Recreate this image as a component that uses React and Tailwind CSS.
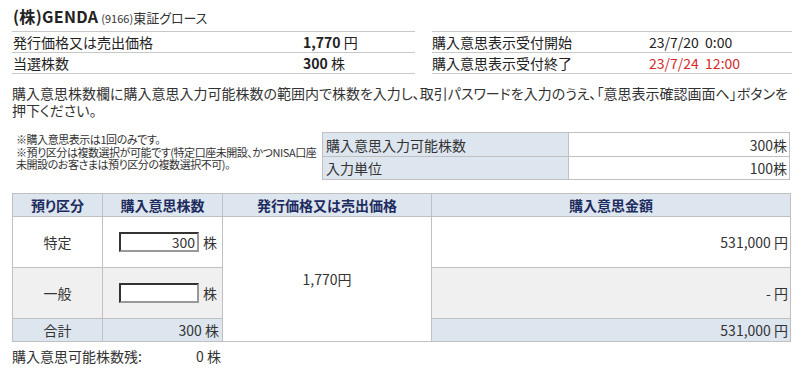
import { useState } from "react";

const FONT = "[font-family:'Noto_Sans_CJK_JP','Noto_Sans',sans-serif] [font-feature-settings:'palt']";

export default function App() {
  const [tokutei, setTokutei] = useState("300");
  const [ippan, setIppan] = useState("");

  return (
    <div className={`w-[802px] h-[372px] overflow-hidden bg-white text-[#333] ${FONT}`}>
      {/* title */}
      <div className="flex items-baseline pl-[13px] pt-[4px] h-[31px]">
        <span className="text-[16px] font-bold text-[#222] tracking-[0.3px]">(株)GENDA</span>
        <span className="ml-[3px] text-[11px]">(9166)</span>
        <span className="text-[13px]">東証グロース</span>
      </div>

      {/* summary */}
      <div className="flex gap-[17px] pl-[12px] text-[14px] text-[#222]">
        <table className="w-[403px] border-collapse">
          <tbody>
            <tr className="h-[21px] border-y border-[#c8c8c8]">
              <td className="pl-[1px] leading-none">発行価格又は売出価格</td>
              <td className="w-[112px] leading-none">
                <b>1,770</b> 円
              </td>
            </tr>
            <tr className="h-[21px] border-b border-[#c8c8c8]">
              <td className="pl-[1px] leading-none">当選株数</td>
              <td className="leading-none">
                <b>300</b> 株
              </td>
            </tr>
          </tbody>
        </table>
        <table className="w-[360px] border-collapse">
          <tbody>
            <tr className="h-[21px] border-y border-[#c8c8c8]">
              <td className="leading-none">購入意思表示受付開始</td>
              <td className="w-[143px] leading-none">23/7/20&nbsp;&nbsp;0:00</td>
            </tr>
            <tr className="h-[21px] border-b border-[#c8c8c8]">
              <td className="leading-none">購入意思表示受付終了</td>
              <td className="leading-none text-[#d42a2a]">23/7/24&nbsp;&nbsp;12:00</td>
            </tr>
          </tbody>
        </table>
      </div>

      <p className="mt-[11px] pl-[12px] pr-[10px] text-[14px] leading-[17px] whitespace-nowrap">
        購入意思株数欄に購入意思入力可能株数の範囲内で株数を入力し、取引パスワードを入力のうえ、「意思表示確認画面へ」ボタンを
        <br />
        押下ください。
      </p>

      {/* notes + limits */}
      <div className="mt-[13px] flex pl-[16px]">
        <div className="w-[306px] text-[11px] leading-[12.5px] tracking-[-0.45px] pt-[1px] whitespace-nowrap">
          <div>※購入意思表示は1回のみです。</div>
          <div>※預り区分は複数選択が可能です(特定口座未開設、かつNISA口座</div>
          <div>未開設のお客さまは預り区分の複数選択不可)。</div>
        </div>
        <table className="w-[468px] border-collapse text-[14px]">
          <tbody>
            <tr className="h-[24px]">
              <td className="w-[246px] border border-[#c0c0c0] bg-[#dde5ef] pl-[3px] leading-none">購入意思入力可能株数</td>
              <td className="border border-[#c0c0c0] pr-[2px] text-right leading-none">300株</td>
            </tr>
            <tr className="h-[23px]">
              <td className="border border-[#c0c0c0] bg-[#dde5ef] pl-[3px] leading-none">入力単位</td>
              <td className="border border-[#c0c0c0] pr-[2px] text-right leading-none">100株</td>
            </tr>
          </tbody>
        </table>
      </div>

      {/* order table */}
      <div className="mt-[13px] pl-[12px]">
        <table className="w-[779px] border-collapse text-[14px]">
          <thead>
            <tr className="h-[23px] bg-[#dde5ef] text-[#1d2c5e]">
              <th className="w-[90px] border border-[#c0c0c0] font-bold leading-none">預り区分</th>
              <th className="w-[120px] border border-[#c0c0c0] font-bold leading-none">購入意思株数</th>
              <th className="w-[209px] border border-[#c0c0c0] font-bold leading-none">発行価格又は売出価格</th>
              <th className="border border-[#c0c0c0] font-bold leading-none">購入意思金額</th>
            </tr>
          </thead>
          <tbody>
            <tr className="h-[51px]">
              <td className="border border-[#c0c0c0] text-center">特定</td>
              <td className="border border-[#c0c0c0] pl-[16px]">
                <div className="flex items-center gap-[4px]">
                  <input
                    value={tokutei}
                    onChange={(e) => setTokutei(e.target.value)}
                    className="w-[80px] h-[20px] border-2 border-t-[#333] border-l-[#333] border-r-[#999] border-b-[#999] bg-white px-[2px] text-right text-[14px] outline-none"
                  />
                  <span>株</span>
                </div>
              </td>
              <td rowSpan={3} className="border border-[#c0c0c0] text-center align-middle">
                1,770円
              </td>
              <td className="border border-[#c0c0c0] pr-[2px] text-right">531,000 円</td>
            </tr>
            <tr className="h-[51px] bg-[#f0f0f0]">
              <td className="border border-[#c0c0c0] text-center">一般</td>
              <td className="border border-[#c0c0c0] pl-[16px]">
                <div className="flex items-center gap-[4px]">
                  <input
                    value={ippan}
                    onChange={(e) => setIppan(e.target.value)}
                    className="w-[80px] h-[20px] border-2 border-t-[#333] border-l-[#333] border-r-[#999] border-b-[#999] bg-white px-[2px] text-right text-[14px] outline-none"
                  />
                  <span>株</span>
                </div>
              </td>
              <td className="border border-[#c0c0c0] pr-[2px] text-right">- 円</td>
            </tr>
            <tr className="h-[23px] bg-[#dde5ef]">
              <td className="border border-[#c0c0c0] text-center leading-none">合計</td>
              <td className="border border-[#c0c0c0] pr-[3px] text-right leading-none">300 株</td>
              <td className="border border-[#c0c0c0] pr-[2px] text-right leading-none">531,000 円</td>
            </tr>
          </tbody>
        </table>
      </div>

      <div className="mt-[7px] flex pl-[12px] text-[14px] leading-none">
        <span className="w-[184px]">購入意思可能株数残:</span>
        <span>0 株</span>
      </div>
    </div>
  );
}
